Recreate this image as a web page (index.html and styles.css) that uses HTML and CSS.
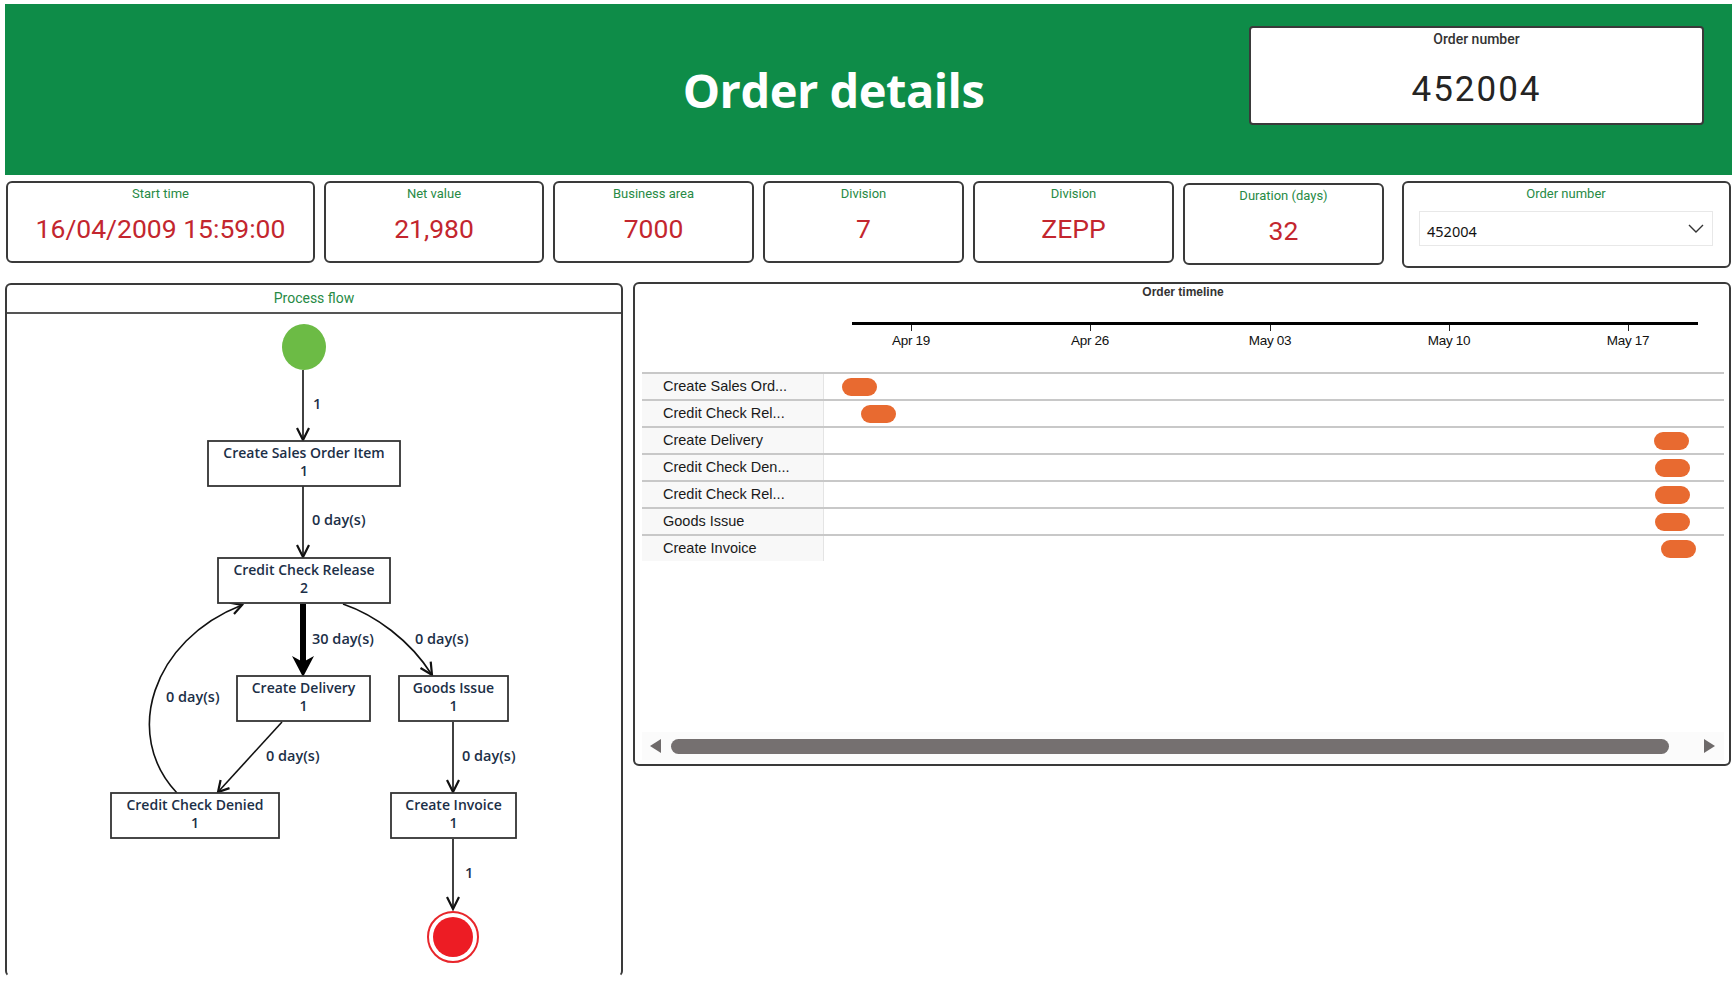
FILE: index.html
```html
<!DOCTYPE html>
<html lang="en">
<head>
<meta charset="utf-8">
<title>Order details</title>
<link rel="stylesheet" href="styles.css">
</head>
<body>
<header class="banner">
  <h1 class="banner-title">Order details</h1>
  <div class="order-card">
    <div class="order-card-label">Order number</div>
    <div class="order-card-value">452004</div>
  </div>
</header>

<section class="kpis">
  <div class="kpi kpi-start"><div class="kpi-label">Start time</div><div class="kpi-value">16/04/2009 15:59:00</div></div>
  <div class="kpi kpi-net"><div class="kpi-label">Net value</div><div class="kpi-value">21,980</div></div>
  <div class="kpi kpi-std"><div class="kpi-label">Business area</div><div class="kpi-value">7000</div></div>
  <div class="kpi kpi-std"><div class="kpi-label">Division</div><div class="kpi-value">7</div></div>
  <div class="kpi kpi-std"><div class="kpi-label">Division</div><div class="kpi-value">ZEPP</div></div>
  <div class="kpi kpi-std kpi-duration"><div class="kpi-label">Duration (days)</div><div class="kpi-value">32</div></div>
  <div class="slicer">
    <div class="kpi-label">Order number</div>
    <div class="dropdown">
      <span class="dropdown-text">452004</span>
      <svg class="chevron" width="16" height="10" viewBox="0 0 16 10"><polyline points="1,1 8,8 15,1" fill="none" stroke="#333" stroke-width="1.4"/></svg>
    </div>
  </div>
</section>

<main class="panels">
  <section class="panel flow-panel">
    <div class="flow-title">Process flow</div>
    <svg class="flow" width="614" height="662" viewBox="0 0 614 662">
      <g transform="translate(-7,-314)">
        <!-- edges -->
        <g class="edge">
          <line x1="303" y1="370" x2="303" y2="440"/>
          <polyline points="297,428 303,440 309,428"/>
          <line x1="303" y1="486" x2="303" y2="557"/>
          <polyline points="297,545 303,557 309,545"/>
          <path d="M343,604 C375,615 410,640 432,675"/>
          <polyline points="420.5,668 432,675 430.7,661.6"/>
          <line x1="282" y1="722" x2="218" y2="792"/>
          <polyline points="220.6,780.1 218,792 229.5,788.1"/>
          <path d="M177,793 C122,735 152,640 242,605"/>
          <polyline points="234,613.9 242,605 229.6,602.7"/>
          <line x1="453" y1="722" x2="453" y2="792"/>
          <polyline points="447,780 453,792 459,780"/>
          <line x1="453" y1="839" x2="453" y2="909"/>
          <polyline points="447,897 453,909 459,897"/>
        </g>
        <line class="edge-thick" x1="303" y1="604" x2="303" y2="662"/>
        <polygon class="head-thick" points="292,656 303,677 314,656 303,662"/>

        <!-- labels -->
        <g class="flow-label">
          <text x="313" y="409">1</text>
          <text x="312" y="525">0 day(s)</text>
          <text x="312" y="644">30 day(s)</text>
          <text x="415" y="644">0 day(s)</text>
          <text x="266" y="761">0 day(s)</text>
          <text x="166" y="702">0 day(s)</text>
          <text x="462" y="761">0 day(s)</text>
          <text x="465" y="878">1</text>
        </g>

        <!-- start / end -->
        <ellipse cx="304" cy="347" rx="22" ry="23" fill="#6cbb45"/>
        <circle cx="453" cy="937" r="25" fill="#fff" stroke="#e8262b" stroke-width="2"/>
        <circle cx="453" cy="937" r="20" fill="#ed1c24"/>

        <!-- nodes -->
        <g class="node">
          <rect x="208" y="441" width="192" height="45"/>
          <text x="304" y="458">Create Sales Order Item</text>
          <text x="304" y="476">1</text>
        </g>
        <g class="node">
          <rect x="218" y="558" width="172" height="45"/>
          <text x="304" y="575">Credit Check Release</text>
          <text x="304" y="593">2</text>
        </g>
        <g class="node">
          <rect x="237" y="676" width="133" height="45"/>
          <text x="303.5" y="693">Create Delivery</text>
          <text x="303.5" y="711">1</text>
        </g>
        <g class="node">
          <rect x="399" y="676" width="109" height="45"/>
          <text x="453.5" y="693">Goods Issue</text>
          <text x="453.5" y="711">1</text>
        </g>
        <g class="node">
          <rect x="111" y="793" width="168" height="45"/>
          <text x="195" y="810">Credit Check Denied</text>
          <text x="195" y="828">1</text>
        </g>
        <g class="node">
          <rect x="391" y="793" width="125" height="45"/>
          <text x="453.5" y="810">Create Invoice</text>
          <text x="453.5" y="828">1</text>
        </g>
      </g>
    </svg>
  </section>

  <section class="panel timeline-panel">
    <div class="tl-title">Order timeline</div>
    <div class="tl-axis-row">
      <div class="tl-axis-spacer"></div>
      <div class="tl-axis">
        <div class="tl-axis-line"></div>
        <div class="tl-tick" style="left:87px"><span class="tl-tick-mark"></span><span class="tl-tick-label">Apr 19</span></div>
        <div class="tl-tick" style="left:266px"><span class="tl-tick-mark"></span><span class="tl-tick-label">Apr 26</span></div>
        <div class="tl-tick" style="left:446px"><span class="tl-tick-mark"></span><span class="tl-tick-label">May 03</span></div>
        <div class="tl-tick" style="left:625px"><span class="tl-tick-mark"></span><span class="tl-tick-label">May 10</span></div>
        <div class="tl-tick" style="left:804px"><span class="tl-tick-mark"></span><span class="tl-tick-label">May 17</span></div>
      </div>
    </div>
    <div class="tl-table">
      <div class="tl-row"><div class="tl-label">Create Sales Ord...</div><div class="tl-track"><span class="tl-bar" style="left:18px"></span></div></div>
      <div class="tl-row"><div class="tl-label">Credit Check Rel...</div><div class="tl-track"><span class="tl-bar" style="left:37px"></span></div></div>
      <div class="tl-row"><div class="tl-label">Create Delivery</div><div class="tl-track"><span class="tl-bar" style="left:830px"></span></div></div>
      <div class="tl-row"><div class="tl-label">Credit Check Den...</div><div class="tl-track"><span class="tl-bar" style="left:831px"></span></div></div>
      <div class="tl-row"><div class="tl-label">Credit Check Rel...</div><div class="tl-track"><span class="tl-bar" style="left:831px"></span></div></div>
      <div class="tl-row"><div class="tl-label">Goods Issue</div><div class="tl-track"><span class="tl-bar" style="left:831px"></span></div></div>
      <div class="tl-row"><div class="tl-label">Create Invoice</div><div class="tl-track"><span class="tl-bar" style="left:837px"></span></div></div>
    </div>
    <div class="tl-fill"></div>
    <div class="tl-scroll">
      <span class="scroll-arrow scroll-left"></span>
      <span class="scroll-thumb"></span>
      <span class="scroll-arrow scroll-right"></span>
    </div>
  </section>
</main>
</body>
</html>
```

FILE: styles.css
```css
* { box-sizing: border-box; }

html, body {
  margin: 0;
  padding: 0;
  background: #ffffff;
}

body {
  width: 1736px;
  height: 988px;
  overflow: hidden;
  padding: 4px 4px 0 5px;
  font-family: Roboto, "Liberation Sans", sans-serif;
}

/* ---------- banner ---------- */
.banner {
  display: flex;
  align-items: flex-start;
  width: 1727px;
  height: 171px;
  background: #0e8c48;
}

.banner-title {
  flex: 1;
  margin: 0;
  align-self: center;
  padding-left: 413px;
  text-align: center;
  font-family: "Open Sans", "Liberation Sans", sans-serif;
  font-weight: 700;
  font-size: 47px;
  line-height: 60px;
  color: #ffffff;
  letter-spacing: -0.5px;
}

.order-card {
  width: 455px;
  height: 99px;
  margin-top: 22px;
  margin-right: 28px;
  background: #ffffff;
  border: 2px solid #3a3a3a;
  border-radius: 4px;
  text-align: center;
}

.order-card-label {
  padding-top: 2px;
  font-size: 14px;
  line-height: 18px;
  font-weight: 500;
  color: #333333;
}

.order-card-value {
  margin-top: 22px;
  font-size: 35px;
  line-height: 40px;
  font-weight: 400;
  letter-spacing: 2px;
  color: #252423;
}

/* ---------- KPI cards ---------- */
.kpis {
  display: flex;
  align-items: flex-start;
  gap: 9px;
  margin-top: 6px;
  padding-left: 1px;
}

.kpi, .slicer {
  height: 82px;
  background: #ffffff;
  border: 2px solid #3a3a3a;
  border-radius: 6px;
  text-align: center;
}

.kpi-start { width: 309px; }
.kpi-net { width: 220px; }
.kpi-std { width: 201px; }
.kpi-duration { margin-top: 2px; }

.kpi-label {
  padding-top: 3px;
  font-size: 13px;
  line-height: 16px;
  color: #278a45;
}

.kpi-value {
  margin-top: 12px;
  font-size: 26.5px;
  line-height: 30px;
  color: #c3262e;
}

.slicer {
  width: 329px;
  height: 87px;
  margin-left: 9px;
  padding: 0 16px 0 15px;
}

.dropdown {
  display: flex;
  align-items: center;
  justify-content: space-between;
  height: 35px;
  margin-top: 9px;
  padding: 0 8px 0 7px;
  border: 1px solid #e8e8e8;
}

.dropdown-text {
  font-family: "Noto Sans", "Open Sans", sans-serif;
  font-size: 14.5px;
  color: #111111;
  padding-top: 4px;
}

/* ---------- panels ---------- */
.panels {
  display: flex;
  align-items: flex-start;
  gap: 10px;
  margin-top: 14px;
}

.panel {
  background: #ffffff;
  border: 2px solid #3a3a3a;
  border-radius: 6px;
}

.flow-panel {
  width: 618px;
  height: 694px;
  margin-top: 1px;
  border-bottom-color: transparent;
}

.flow-title {
  height: 29px;
  border-bottom: 2px solid #555555;
  text-align: center;
  font-size: 14px;
  line-height: 27px;
  color: #278a45;
}

.flow {
  display: block;
}

.edge line, .edge path, .edge polyline {
  fill: none;
  stroke: #111111;
  stroke-width: 1.6;
}

.edge polyline {
  stroke-width: 2.2;
  stroke-linejoin: miter;
}

.edge-thick {
  stroke: #000000;
  stroke-width: 6;
}

.head-thick {
  fill: #000000;
}

.flow-label text {
  font-family: "Open Sans", "Noto Sans", sans-serif;
  font-weight: 600;
  font-size: 14.5px;
  fill: #1c2f47;
}

.node rect {
  fill: #ffffff;
  stroke: #333333;
  stroke-width: 1.8;
}

.node text {
  font-family: "Open Sans", "Noto Sans", sans-serif;
  font-weight: 600;
  font-size: 14px;
  fill: #1c2f47;
  text-anchor: middle;
}

/* ---------- timeline ---------- */
.timeline-panel {
  width: 1098px;
  height: 484px;
  display: flex;
  flex-direction: column;
  padding: 0 5px 4px 7px;
}

.tl-title {
  height: 16px;
  text-align: center;
  font-family: "Liberation Sans", Arial, sans-serif;
  font-weight: 700;
  font-size: 12px;
  line-height: 16px;
  color: #333333;
}

.tl-axis-row {
  display: flex;
  height: 72px;
}

.tl-axis-spacer {
  width: 182px;
  flex: none;
}

.tl-axis {
  position: relative;
  flex: 1;
}

.tl-axis-line {
  margin-top: 22px;
  margin-left: 28px;
  width: 846px;
  height: 3px;
  background: #000000;
}

.tl-tick {
  position: absolute;
  top: 25px;
  width: 0;
}

.tl-tick-mark {
  display: block;
  width: 1px;
  height: 6px;
  background: #222222;
}

.tl-tick-label {
  position: absolute;
  top: 8px;
  left: -40px;
  width: 80px;
  text-align: center;
  font-family: "Liberation Sans", Arial, sans-serif;
  font-size: 13.5px;
  line-height: 16px;
  color: #111111;
  letter-spacing: -0.3px;
}

.tl-table {
  display: flex;
  flex-direction: column;
}

.tl-row {
  display: flex;
  height: 27px;
  border-top: 2px solid #c8c8c8;
}

.tl-label {
  width: 182px;
  flex: none;
  padding-left: 21px;
  background: #f8f8f8;
  border-right: 1px solid #e4e4e4;
  font-family: "Liberation Sans", Arial, sans-serif;
  font-size: 14.5px;
  line-height: 25px;
  color: #1a1a1a;
  white-space: nowrap;
}

.tl-track {
  position: relative;
  flex: 1;
}

.tl-bar {
  position: absolute;
  top: 4px;
  width: 35px;
  height: 18px;
  border-radius: 9px;
  background: #e86a30;
}

.tl-fill {
  flex: 1;
}

.tl-scroll {
  display: flex;
  align-items: center;
  height: 28px;
  padding: 0 7px 0 8px;
  background: #fbfbfb;
}

.scroll-arrow {
  width: 0;
  height: 0;
  border-top: 7px solid transparent;
  border-bottom: 7px solid transparent;
}

.scroll-left {
  border-right: 11px solid #6e6a6a;
}

.scroll-right {
  border-left: 11px solid #6e6a6a;
}

.scroll-thumb {
  width: 998px;
  height: 15px;
  margin: 0 35px 0 10px;
  border-radius: 8px;
  background: #757070;
}
```
